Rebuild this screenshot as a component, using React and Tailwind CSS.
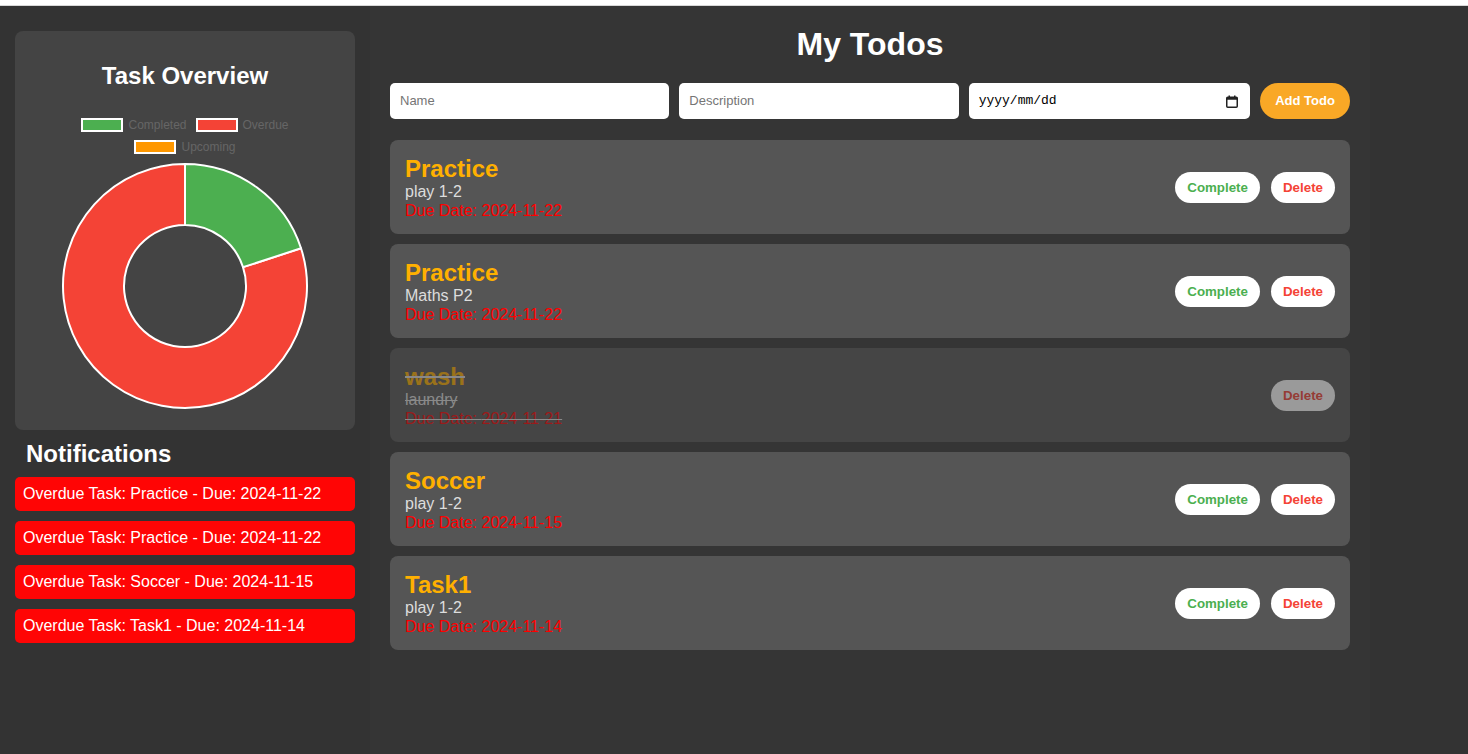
import React from "react";

const todos = [
  { title: "Practice", desc: "play 1-2", due: "2024-11-22", done: false },
  { title: "Practice", desc: "Maths P2", due: "2024-11-22", done: false },
  { title: "wash", desc: "laundry", due: "2024-11-21", done: true },
  { title: "Soccer", desc: "play 1-2", due: "2024-11-15", done: false },
  { title: "Task1", desc: "play 1-2", due: "2024-11-14", done: false },
];

const notifications = [
  "Overdue Task: Practice - Due: 2024-11-22",
  "Overdue Task: Practice - Due: 2024-11-22",
  "Overdue Task: Soccer - Due: 2024-11-15",
  "Overdue Task: Task1 - Due: 2024-11-14",
];

function LegendItem({ color, label }) {
  return (
    <div className="flex items-center gap-[5px]">
      <span className={`block w-[42px] h-[14px] border-2 border-white ${color}`} />
      <span className="text-[12px] leading-[14px] text-[#666]">{label}</span>
    </div>
  );
}

function Donut() {
  return (
    <svg width="250" height="250" viewBox="0 0 250 250">
      <path
        d="M241.03 87.3 A122 122 0 1 1 125 3 L125 64 A61 61 0 1 0 183.02 106.15 Z"
        fill="#f44336"
        stroke="#fff"
        strokeWidth="2"
        strokeLinejoin="round"
      />
      <path
        d="M125 3 A122 122 0 0 1 241.03 87.3 L183.02 106.15 A61 61 0 0 0 125 64 Z"
        fill="#4caf50"
        stroke="#fff"
        strokeWidth="2"
        strokeLinejoin="round"
      />
    </svg>
  );
}

function CalendarIcon() {
  return (
    <svg width="12" height="13" viewBox="0 0 12 13">
      <rect x="0.75" y="2.25" width="10.5" height="10" rx="1" fill="none" stroke="#222" strokeWidth="1.5" />
      <rect x="0.75" y="2.25" width="10.5" height="2.5" fill="#222" />
      <rect x="2.5" y="0.5" width="1.5" height="2.5" fill="#222" />
      <rect x="8" y="0.5" width="1.5" height="2.5" fill="#222" />
    </svg>
  );
}

function TodoCard({ todo }) {
  return (
    <div
      className={`flex items-center justify-between rounded-lg pl-[15px] pr-[15px] pt-[16px] pb-[14px] bg-[#555] ${
        todo.done ? "opacity-50" : ""
      }`}
    >
      <div className={`text-[#ddd] ${todo.done ? "line-through" : ""}`}>
        <div className="text-[24px] leading-[26px] font-bold text-[#ffb000]">{todo.title}</div>
        <div className="text-[16px] leading-[19px] text-[#ddd]">{todo.desc}</div>
        <div className="text-[16px] leading-[19px] text-[#ff0000]">Due Date: {todo.due}</div>
      </div>
      <div className="flex items-center gap-[11px] mb-[2px]">
        {!todo.done && (
          <button className="bg-white rounded-full px-3 py-2 text-[13.33px] leading-[15px] font-bold text-[#4caf50]">
            Complete
          </button>
        )}
        <button className="bg-white rounded-full px-3 py-2 text-[13.33px] leading-[15px] font-bold text-[#f44336]">
          Delete
        </button>
      </div>
    </div>
  );
}

export default function App() {
  return (
    <div className="font-['Liberation_Sans',Arial,sans-serif] bg-[#333] min-h-screen">
      <div className="h-[6px] bg-white border-b border-[#d8d8d8]" />
      <div className="flex min-h-[748px]">
        <aside className="w-[370px] shrink-0 bg-[#333] px-[15px] pt-[25px]">
          <div className="rounded-lg bg-[#444] pt-[31px] pb-[19px] flex flex-col items-center">
            <h2 className="text-[24px] leading-[28px] font-bold text-white">Task Overview</h2>
            <div className="mt-[24px] flex flex-col items-center">
              <div className="h-[22px] flex items-center gap-[9px]">
                <LegendItem color="bg-[#4caf50]" label="Completed" />
                <LegendItem color="bg-[#f44336]" label="Overdue" />
              </div>
              <div className="h-[22px] flex items-center">
                <LegendItem color="bg-[#ff9800]" label="Upcoming" />
              </div>
            </div>
            <div className="mt-[3px]">
              <Donut />
            </div>
          </div>
          <h3 className="mt-[10px] pl-[11px] text-[24px] leading-[28px] font-bold text-white">Notifications</h3>
          <div className="mt-[9px] flex flex-col gap-[10px]">
            {notifications.map((n, i) => (
              <div key={i} className="bg-[#ff0505] rounded-[5px] px-[8px] py-[8px] text-[16px] leading-[18px] text-white">
                {n}
              </div>
            ))}
          </div>
        </aside>
        <main className="w-[1000px] shrink-0 bg-[#353535] px-[20px] pt-[20px]">
          <h1 className="text-center text-[32px] leading-[37px] font-bold text-white">My Todos</h1>
          <div className="mt-[20px] flex gap-[10px] h-[36px]">
            <input
              className="flex-1 min-w-0 bg-white rounded-[5px] px-[10px] text-[13px] text-black placeholder:text-[#757575] outline-none"
              placeholder="Name"
            />
            <input
              className="flex-1 min-w-0 bg-white rounded-[5px] px-[10px] text-[13px] text-black placeholder:text-[#757575] outline-none"
              placeholder="Description"
            />
            <div className="flex-1 min-w-0 bg-white rounded-[5px] pl-[10px] pr-[12px] flex items-center justify-between">
              <span className="font-['Liberation_Mono',monospace] text-[13px] text-black">yyyy/mm/dd</span>
              <CalendarIcon />
            </div>
            <button className="w-[90px] shrink-0 bg-[#f9a826] rounded-full text-[13px] font-bold text-white">
              Add Todo
            </button>
          </div>
          <div className="mt-[21px] flex flex-col gap-[10px]">
            {todos.map((t, i) => (
              <TodoCard key={i} todo={t} />
            ))}
          </div>
        </main>
        <div className="flex-1 bg-[#333]" />
      </div>
    </div>
  );
}
